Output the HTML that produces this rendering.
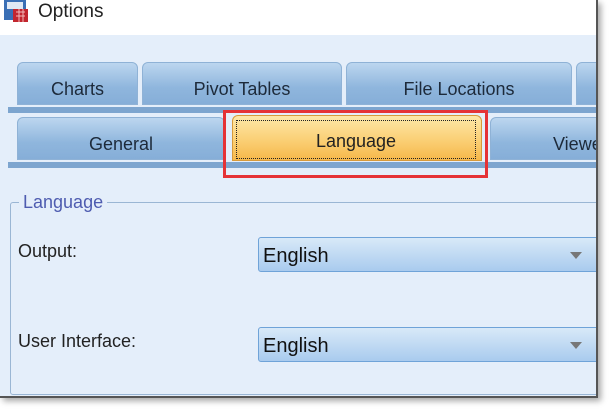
<!DOCTYPE html>
<html><head><style>
body{margin:0;width:611px;height:411px;background:#fff;position:relative;overflow:hidden;font-family:"Liberation Sans",sans-serif;}
.win{position:absolute;left:0;top:0;width:596px;height:396px;background:#fff;border-right:2px solid #555;border-bottom:2px solid #555;box-shadow:3px 3px 6px rgba(0,0,0,.35);overflow:hidden;}
.content{position:absolute;left:0;top:35px;width:596px;height:361px;background:#e4eefa;}
.t{position:absolute;font-size:18px;color:#222;}
.tab{position:absolute;height:43px;border:1px solid #8fb2d6;border-radius:6px 6px 0 0;background:linear-gradient(#bcd6ef,#8fb6dd 60%,#86aed8);box-sizing:border-box;text-align:center;line-height:52px;font-size:18px;color:#1d2a3a;}
.strip{position:absolute;left:8px;width:590px;height:6px;background:#7da5cf;}
.combo{position:absolute;left:258px;width:345px;height:35px;border:1px solid #6fa3d8;border-radius:3px;box-sizing:border-box;background:linear-gradient(#d8e9f8,#a9cbee);font-size:20px;line-height:36px;padding-left:4px;color:#111;}
.arr{position:absolute;right:20px;top:14px;width:0;height:0;border-left:6px solid transparent;border-right:6px solid transparent;border-top:7px solid #777;}
</style></head><body>
<div class="win">
<svg style="position:absolute;left:2px;top:0" width="28" height="24"><rect x="2" y="0" width="22" height="20" fill="#3a6fb5"/><rect x="5" y="2" width="16" height="7" fill="#dfe8f4"/><rect x="11" y="9" width="15" height="13" fill="#c2262e"/><path d="M14 12h9M14 16h9M17 9v13M21 9v13" stroke="#f2b8b8" stroke-width="1"/></svg>
<div class="t" style="left:38px;top:1px;font-size:19px;">Options</div>
<div class="content"></div>
<div class="tab" style="left:17px;top:62px;width:121px;">Charts</div>
<div class="tab" style="left:142px;top:62px;width:200px;">Pivot Tables</div>
<div class="tab" style="left:346px;top:62px;width:226px;">File Locations</div>
<div class="tab" style="left:576px;top:62px;width:40px;"></div>
<div class="strip" style="top:107px;"></div>
<div class="tab" style="left:17px;top:117px;width:208px;">General</div>
<div class="tab" style="left:490px;top:117px;width:140px;text-align:left;padding-left:62px;">Viewer</div>
<div class="tab" style="left:232px;top:115px;width:250px;height:46px;background:linear-gradient(#fde7a8,#fbd27a 50%,#f6b84a);border-color:#d79a3a;"></div>
<div style="position:absolute;left:236px;top:120px;width:238px;height:37px;border:1px dotted #222;text-align:center;line-height:40px;font-size:18px;color:#222;">Language</div>
<div class="strip" style="top:162px;"></div>
<div style="position:absolute;left:223px;top:110px;width:259px;height:62px;border:3px solid #e53236;"></div>
<div style="position:absolute;left:10px;top:202px;width:600px;height:191px;border:1px solid #9ab6d4;border-radius:3px;"></div>
<div class="t" style="left:19px;top:192px;background:#e4eefa;padding:0 4px;color:#4e5cb0;">Language</div>
<div class="t" style="left:18px;top:241px;">Output:</div>
<div class="combo" style="top:237px;">English<div class="arr"></div></div>
<div class="t" style="left:18px;top:331px;">User Interface:</div>
<div class="combo" style="top:327px;">English<div class="arr"></div></div>
</div>
</body></html>
